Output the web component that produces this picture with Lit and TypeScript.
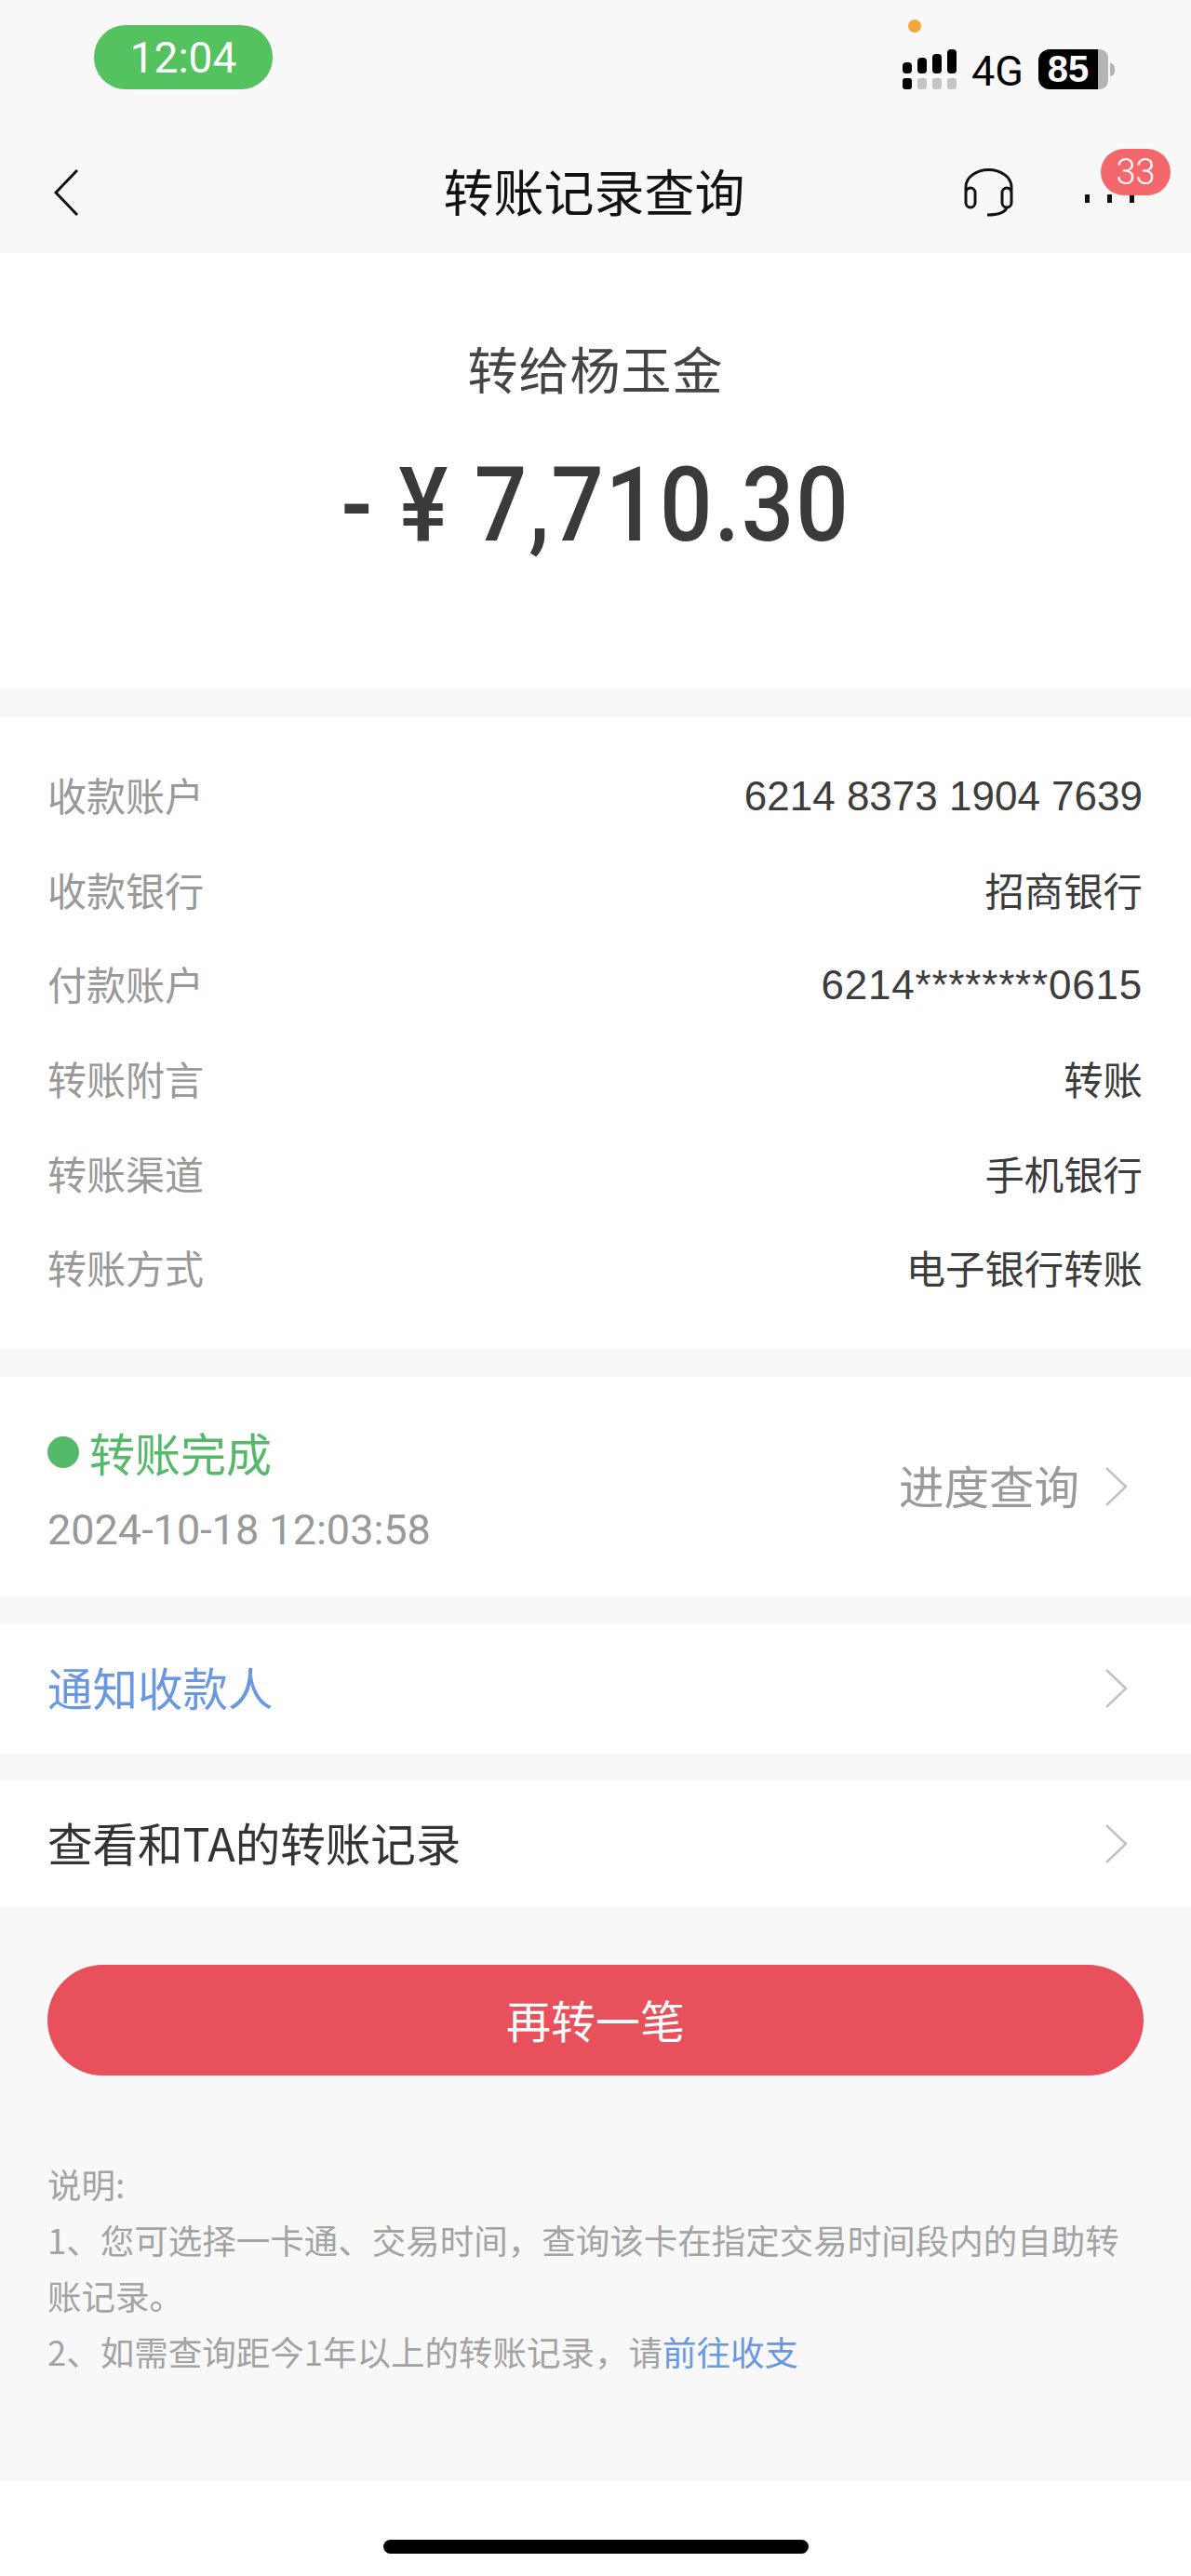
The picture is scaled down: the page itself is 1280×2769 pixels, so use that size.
import { LitElement, html, css, svg } from "lit";
import { customElement } from "lit/decorators.js";

const DETAILS = [
  { k: "收款账户", v: "6214 8373 1904 7639", cls: "num" },
  { k: "收款银行", v: "招商银行", cls: "" },
  { k: "付款账户", v: "6214********0615", cls: "num mask" },
  { k: "转账附言", v: "转账", cls: "" },
  { k: "转账渠道", v: "手机银行", cls: "" },
  { k: "转账方式", v: "电子银行转账", cls: "" },
];

// full-width comma, as in the notes of the original
const COMMA = "\uFF0C";

const chevron = html`<svg class="chev" width="26" height="44" viewBox="0 0 26 44" fill="none">
  <path d="M2 2 L23 22 L2 42" stroke="#c2c2c2" stroke-width="2.5" />
</svg>`;

@customElement("app-root")
export class AppRoot extends LitElement {
  static styles = css`
    :host {
      display: block;
      width: 1280px;
      height: 2769px;
      overflow: hidden;
      background: #f8f8f8;
      color: #333;
      font-family: "Liberation Sans", "Noto Sans CJK SC", sans-serif;
    }
    .status {
      position: relative;
      height: 142px;
      box-sizing: border-box;
      padding: 27px 82px 0 101px;
      display: flex;
      justify-content: space-between;
      align-items: flex-start;
    }
    .time {
      width: 192px;
      height: 69px;
      border-radius: 34px;
      background: #53c25f;
      color: #fff;
      font-size: 46px;
      font-family: "Roboto", sans-serif;
      display: flex;
      align-items: center;
      justify-content: center;
    }
    .indicators {
      margin-top: 26px;
      display: flex;
      align-items: flex-start;
      gap: 16px;
      color: #000;
    }
    .net {
      font-size: 45px;
      line-height: 43px;
      font-family: "Roboto", sans-serif;
      margin-top: 2px;
    }
    .battery {
      display: flex;
      align-items: center;
    }
    .level {
      width: 64px;
      height: 43px;
      border-radius: 12px 0 0 12px;
      background: #000;
      color: #fff;
      font-size: 40px;
      font-weight: 700;
      text-align: center;
      line-height: 43px;
    }
    .rest {
      width: 11px;
      height: 43px;
      border-radius: 0 9px 9px 0;
      background: #b4b4b4;
    }
    .tip {
      width: 5px;
      height: 14px;
      margin-left: 2px;
      border-radius: 0 6px 6px 0;
      background: #b4b4b4;
    }
    .cam-dot {
      position: absolute;
      left: 976px;
      top: 21px;
      width: 14px;
      height: 14px;
      border-radius: 50%;
      background: #f2a73b;
    }
    .nav {
      position: relative;
      height: 130px;
      box-sizing: border-box;
      padding: 0 61px 0 58px;
      display: grid;
      grid-template-columns: 1fr auto 1fr;
      align-items: center;
    }
    .title {
      font-size: 54px;
      line-height: 60px;
      padding-bottom: 4px;
      color: #111;
      font-family: "Noto Sans CJK SC", sans-serif;
    }
    .actions {
      display: flex;
      justify-content: flex-end;
      align-items: center;
      gap: 77px;
    }
    .dots {
      display: flex;
      gap: 19px;
      margin-top: 13px;
    }
    .dots i {
      width: 5px;
      height: 9px;
      background: #111;
    }
    .badge {
      position: absolute;
      left: 1183px;
      top: 18px;
      width: 75px;
      height: 50px;
      border-radius: 25px;
      background: #f4676a;
      color: #fff;
      font-size: 38px;
      font-family: "Roboto", sans-serif;
      font-weight: 300;
      display: flex;
      align-items: center;
      justify-content: center;
    }
    .card {
      background: #fff;
    }
    .hero {
      height: 468px;
      box-sizing: border-box;
      padding-top: 97px;
      margin-bottom: 31px;
      text-align: center;
    }
    .payee {
      font-size: 54px;
      line-height: 54px;
      letter-spacing: 1px;
      font-family: "Noto Sans CJK SC", sans-serif;
      color: #444;
    }
    .amount {
      margin-top: 65px;
      font-family: "Roboto", sans-serif;
      font-weight: 500;
      font-size: 111px;
      line-height: 110px;
      letter-spacing: 2px;
      color: #3a3a3a;
      transform: scaleX(0.897);
    }
    .details {
      height: 679px;
      box-sizing: border-box;
      padding: 32px 52px 0 51px;
      margin-bottom: 30px;
    }
    .row {
      height: 101.6px;
      display: flex;
      justify-content: space-between;
      align-items: center;
      font-size: 42px;
      font-family: "Noto Sans CJK SC", sans-serif;
    }
    .row .k {
      color: #999;
    }
    .row .v {
      color: #3c3c3c;
      font-size: 42.4px;
    }
    .row .num {
      font-family: "Liberation Sans", sans-serif;
      font-size: 44px;
      padding-top: 4px;
    }
    .row .mask {
      letter-spacing: 0.8px;
    }
    .progress {
      height: 236px;
      box-sizing: border-box;
      padding: 0 67px 0 51px;
      margin-bottom: 29px;
      display: flex;
      justify-content: space-between;
      align-items: center;
    }
    .progress-info {
      padding-top: 5px;
    }
    .state {
      display: flex;
      align-items: center;
      gap: 11px;
      font-size: 49px;
      line-height: 60px;
      color: #54b968;
      font-family: "Noto Sans CJK SC", sans-serif;
    }
    .state i {
      width: 34px;
      height: 34px;
      border-radius: 50%;
      background: #54b968;
    }
    .when {
      margin-top: 29px;
      font-size: 45px;
      line-height: 50px;
      color: #999;
      font-family: "Roboto", sans-serif;
    }
    .query {
      display: flex;
      align-items: center;
      gap: 27px;
      font-size: 48.5px;
      color: #999;
      font-family: "Noto Sans CJK SC", sans-serif;
    }
    .query span {
      padding-bottom: 4px;
    }
    .link {
      box-sizing: border-box;
      padding: 0 67px 0 51px;
      display: flex;
      justify-content: space-between;
      align-items: center;
      font-size: 48.5px;
      font-family: "Noto Sans CJK SC", sans-serif;
    }
    .link span {
      padding-bottom: 4px;
    }
    .notify {
      height: 140px;
      margin-bottom: 28px;
      color: #6a98e0;
    }
    .history {
      height: 137px;
      color: #333;
    }
    .again {
      margin: 62px 51px 0;
      height: 119px;
      border-radius: 60px;
      background: #e8505b;
      color: #fff;
      font-size: 48px;
      padding-bottom: 4px;
      box-sizing: border-box;
      font-family: "Noto Sans CJK SC", sans-serif;
      display: flex;
      align-items: center;
      justify-content: center;
    }
    .notes {
      margin: 87px 51px 0;
      height: 349px;
      font-size: 36.5px;
      line-height: 60px;
      color: #a3a3a3;
      font-family: "Noto Sans CJK SC", sans-serif;
    }
    .notes a {
      color: #6a98e0;
    }
    .foot {
      height: 102px;
      background: #fff;
      display: flex;
      justify-content: center;
      padding-top: 63px;
      box-sizing: border-box;
    }
    .home {
      width: 457px;
      height: 15px;
      border-radius: 8px;
      background: #000;
    }
  `;

  renderSignal() {
    const tops = [67, 62, 58, 53];
    return html`<svg width="58" height="43" viewBox="970 53 58 43">
      ${tops.map((y, i) => {
        const x = 970 + i * 16;
        return svg`
          <rect x=${x} y=${y} width="10" height=${79 - y} rx="4" fill="#000" />
          <rect x=${x} y="84" width="10" height="12" rx="3" fill=${i === 0 ? "#000" : "#c4c4c4"} />`;
      })}
    </svg>`;
  }

  render() {
    return html`
      <div class="status">
        <div class="time">12:04</div>
        <div class="indicators">
          ${this.renderSignal()}
          <span class="net">4G</span>
          <div class="battery">
            <div class="level">85</div>
            <div class="rest"></div>
            <div class="tip"></div>
          </div>
        </div>
        <div class="cam-dot"></div>
      </div>

      <div class="nav">
        <svg width="26" height="50" viewBox="0 0 26 50" fill="none">
          <path d="M25 1 L2 25 L25 49" stroke="#111" stroke-width="3" />
        </svg>
        <div class="title">转账记录查询</div>
        <div class="actions">
          <svg width="53" height="52" viewBox="0 0 53 52" fill="none" stroke="#111" stroke-width="3">
            <path d="M2 24 V20 A24.5 18.5 0 0 1 51 20 V24" />
            <rect x="2" y="21" width="10" height="21" rx="5" />
            <rect x="41" y="21" width="10" height="21" rx="5" />
            <path d="M46 42 C44 48 37 50 25 50" />
          </svg>
          <div class="dots"><i></i><i></i><i></i></div>
        </div>
        <div class="badge">33</div>
      </div>

      <div class="card hero">
        <div class="payee">转给杨玉金</div>
        <div class="amount">- ¥ 7,710.30</div>
      </div>

      <div class="card details">
        ${DETAILS.map(
          (d) => html`<div class="row"><span class="k">${d.k}</span><span class="v ${d.cls}">${d.v}</span></div>`
        )}
      </div>

      <div class="card progress">
        <div class="progress-info">
          <div class="state"><i></i>转账完成</div>
          <div class="when">2024-10-18 12:03:58</div>
        </div>
        <div class="query"><span>进度查询</span>${chevron}</div>
      </div>

      <div class="card link notify"><span>通知收款人</span>${chevron}</div>
      <div class="card link history"><span>查看和TA的转账记录</span>${chevron}</div>

      <div class="again">再转一笔</div>

      <div class="notes">
        说明:<br />
        1、您可选择一卡通、交易时间${COMMA}查询该卡在指定交易时间段内的自助转账记录。<br />
        2、如需查询距今1年以上的转账记录${COMMA}请<a>前往收支</a>
      </div>

      <div class="foot"><div class="home"></div></div>
    `;
  }
}
